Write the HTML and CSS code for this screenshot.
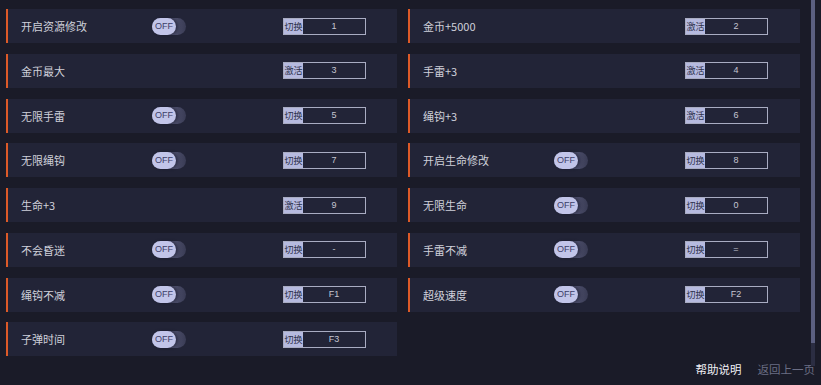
FILE: index.html
```html
<!DOCTYPE html>
<html lang="zh">
<head>
<meta charset="utf-8">
<link rel="stylesheet" href="styles.css">
</head>
<body>
<div class="page">
  <div class="content">
    <div class="grid">
      <div class="row"><span class="label">开启资源修改</span><span class="slot"><span class="toggle"><span class="knob">OFF</span></span></span><span class="key"><span class="kl">切换</span><span class="kv">1</span></span></div>
      <div class="row"><span class="label">金币+5000</span><span class="slot"></span><span class="key"><span class="kl">激活</span><span class="kv">2</span></span></div>
      <div class="row"><span class="label">金币最大</span><span class="slot"></span><span class="key"><span class="kl">激活</span><span class="kv">3</span></span></div>
      <div class="row"><span class="label">手雷+3</span><span class="slot"></span><span class="key"><span class="kl">激活</span><span class="kv">4</span></span></div>
      <div class="row"><span class="label">无限手雷</span><span class="slot"><span class="toggle"><span class="knob">OFF</span></span></span><span class="key"><span class="kl">切换</span><span class="kv">5</span></span></div>
      <div class="row"><span class="label">绳钩+3</span><span class="slot"></span><span class="key"><span class="kl">激活</span><span class="kv">6</span></span></div>
      <div class="row"><span class="label">无限绳钩</span><span class="slot"><span class="toggle"><span class="knob">OFF</span></span></span><span class="key"><span class="kl">切换</span><span class="kv">7</span></span></div>
      <div class="row"><span class="label">开启生命修改</span><span class="slot"><span class="toggle"><span class="knob">OFF</span></span></span><span class="key"><span class="kl">切换</span><span class="kv">8</span></span></div>
      <div class="row"><span class="label">生命+3</span><span class="slot"></span><span class="key"><span class="kl">激活</span><span class="kv">9</span></span></div>
      <div class="row"><span class="label">无限生命</span><span class="slot"><span class="toggle"><span class="knob">OFF</span></span></span><span class="key"><span class="kl">切换</span><span class="kv">0</span></span></div>
      <div class="row"><span class="label">不会昏迷</span><span class="slot"><span class="toggle"><span class="knob">OFF</span></span></span><span class="key"><span class="kl">切换</span><span class="kv">-</span></span></div>
      <div class="row"><span class="label">手雷不减</span><span class="slot"><span class="toggle"><span class="knob">OFF</span></span></span><span class="key"><span class="kl">切换</span><span class="kv">=</span></span></div>
      <div class="row"><span class="label">绳钩不减</span><span class="slot"><span class="toggle"><span class="knob">OFF</span></span></span><span class="key"><span class="kl">切换</span><span class="kv">F1</span></span></div>
      <div class="row"><span class="label">超级速度</span><span class="slot"><span class="toggle"><span class="knob">OFF</span></span></span><span class="key"><span class="kl">切换</span><span class="kv">F2</span></span></div>
      <div class="row"><span class="label">子弹时间</span><span class="slot"><span class="toggle"><span class="knob">OFF</span></span></span><span class="key"><span class="kl">切换</span><span class="kv">F3</span></span></div>
    </div>
    <div class="footer">
      <span class="help">帮助说明</span>
      <span class="back">返回上一页</span>
    </div>
  </div>
  <div class="scrollbar"><div class="thumb"></div></div>
</div>
</body>
</html>
```

FILE: styles.css
```css
html, body {
  margin: 0;
  padding: 0;
  background: #1a1b28;
  width: 821px;
  height: 385px;
  overflow: hidden;
  font-family: "Noto Sans CJK SC", "Noto Sans", sans-serif;
}

.page {
  display: flex;
  width: 821px;
  height: 385px;
}

.content {
  width: 811px;
  display: flex;
  flex-direction: column;
}

.grid {
  display: grid;
  grid-template-columns: 391px 392px;
  column-gap: 11px;
  row-gap: 10.75px;
  grid-auto-rows: 34px;
  padding: 9px 0 0 6px;
}

.row {
  display: flex;
  align-items: center;
  background: #222437;
  border-left: 2px solid #dd5a28;
  padding-left: 13px;
  box-sizing: border-box;
}

.label {
  width: 131px;
  font-size: 11px;
  color: #cfd0da;
  white-space: nowrap;
}

.slot {
  width: 34px;
  height: 17px;
  margin-right: 97px;
  display: flex;
}

.toggle {
  width: 34px;
  height: 17px;
  border-radius: 9px;
  background: linear-gradient(90deg, #5a5d7c 0%, #4a4c68 70%, #3a3c55 100%);
  display: flex;
}

.knob {
  width: 24px;
  height: 17px;
  border-radius: 9px;
  background: #c2c5e9;
  color: #3c4068;
  font-family: "Liberation Sans", sans-serif;
  font-size: 9px;
  line-height: 17px;
  text-align: center;
  box-shadow: 2px 0 3px rgba(20, 20, 40, 0.5);
}

.key {
  width: 83px;
  height: 17px;
  border: 1px solid #a9acc2;
  box-sizing: border-box;
  display: flex;
}

.kl {
  width: 19px;
  background: #b6badf;
  color: #2c2f4a;
  font-size: 9px;
  line-height: 15px;
  text-align: center;
  white-space: nowrap;
  overflow: hidden;
}

.kv {
  flex: 1;
  text-align: center;
  color: #c5c6d2;
  font-family: "Liberation Sans", sans-serif;
  font-size: 9px;
  line-height: 15px;
}

.footer {
  display: flex;
  justify-content: flex-end;
  gap: 16px;
  margin-top: 5px;
  padding-right: 0;
  font-size: 11.5px;
  line-height: 16px;
}

.help {
  color: #eeeef4;
}

.back {
  color: #6b6e84;
  margin-right: -4px;
}

.scrollbar {
  width: 4px;
  height: 366px;
  background: #2b2d42;
  display: flex;
  flex-direction: column;
}

.thumb {
  width: 4px;
  height: 343px;
  background: #5b5f80;
}
```
